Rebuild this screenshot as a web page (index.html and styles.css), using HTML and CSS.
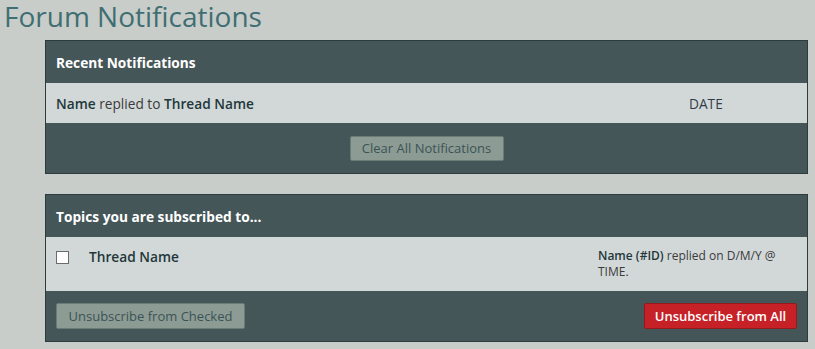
FILE: index.html
```html
<!DOCTYPE html>
<html>
<head>
<meta charset="utf-8">
<link rel="stylesheet" href="styles.css">
</head>
<body>
<h1 class="title">Forum Notifications</h1>

<section class="panel">
  <div class="panel-head">Recent Notifications</div>
  <div class="row row-notif">
    <div class="notif-text"><b>Name</b> replied to <b>Thread Name</b></div>
    <div class="notif-date">DATE</div>
  </div>
  <div class="panel-foot foot-center">
    <button class="btn btn-grey btn-clear">Clear All Notifications</button>
  </div>
</section>

<section class="panel panel-second">
  <div class="panel-head">Topics you are subscribed to...</div>
  <div class="row row-topic">
    <span class="check"></span>
    <div class="topic-name">Thread Name</div>
    <div class="topic-info"><b>Name (#ID)</b> replied on D/M/Y @ TIME.</div>
  </div>
  <div class="panel-foot foot-split">
    <button class="btn btn-grey btn-checked">Unsubscribe from Checked</button>
    <button class="btn btn-red">Unsubscribe from All</button>
  </div>
</section>
</body>
</html>
```

FILE: styles.css
```css
* { box-sizing: border-box; }
body {
  margin: 0;
  background: #c8cdc9;
  font-family: "Open Sans", "Liberation Sans", sans-serif;
  color: #2f3c3f;
}
.title {
  margin: 0 0 9px 0;
  padding: 1px 0 0 4px;
  font-size: 28px;
  line-height: 30px;
  font-weight: 400;
  color: #3f6e73;
  white-space: nowrap;
}
.panel {
  margin-left: 45px;
  width: 763px;
  border: 1px solid #2e3b3d;
  background: #455659;
}
.panel-second { margin-top: 20px; }
.panel-head {
  height: 42px;
  display: flex;
  align-items: center;
  padding: 0 10px;
  color: #ffffff;
  font-weight: 700;
  font-size: 13.7px;
}
.row {
  background: #d2d8d8;
  display: flex;
  font-size: 13.7px;
  color: #3b3b3b;
}
.row b { font-weight: 600; color: #22373a; }
.row-notif {
  height: 40px;
  align-items: center;
  padding: 0 10px;
}
.notif-text { flex: 1; }
.notif-date { width: 108px; color: #2f3c4a; }
.row-topic {
  height: 54px;
  padding: 10px 10px 12px 10px;
  align-items: flex-start;
}
.check {
  width: 13px;
  height: 13px;
  margin-top: 4px;
  border: 1px solid #6b6b6b;
  background: #ffffff;
  flex: none;
}
.topic-name {
  margin-left: 20px;
  font-weight: 600;
  color: #22373a;
  line-height: 20px;
  flex: 1;
  min-width: 0;
}
.topic-info {
  width: 199px;
  flex: none;
  font-size: 12px;
  line-height: 16px;
  margin-top: 1px;
}
.panel-foot {
  height: 50px;
  display: flex;
  align-items: center;
  padding: 0 10px;
}
.foot-center { justify-content: center; }
.foot-split { justify-content: space-between; }
.btn {
  font-family: "Open Sans", "Liberation Sans", sans-serif;
  font-size: 13px;
  height: 26px;
  border-radius: 2px;
  padding: 0;
  white-space: nowrap;
  cursor: pointer;
}
.btn-grey {
  background: #8c9c94;
  border: 1px solid #6c7b75;
  color: #3c5356;
}
.btn-clear { width: 154px; height: 25px; }
.btn-checked { width: 189px; }
.btn-red {
  width: 153px;
  background: #c62127;
  border: 1px solid #941a1e;
  color: #ffffff;
  font-weight: 600;
}
```
